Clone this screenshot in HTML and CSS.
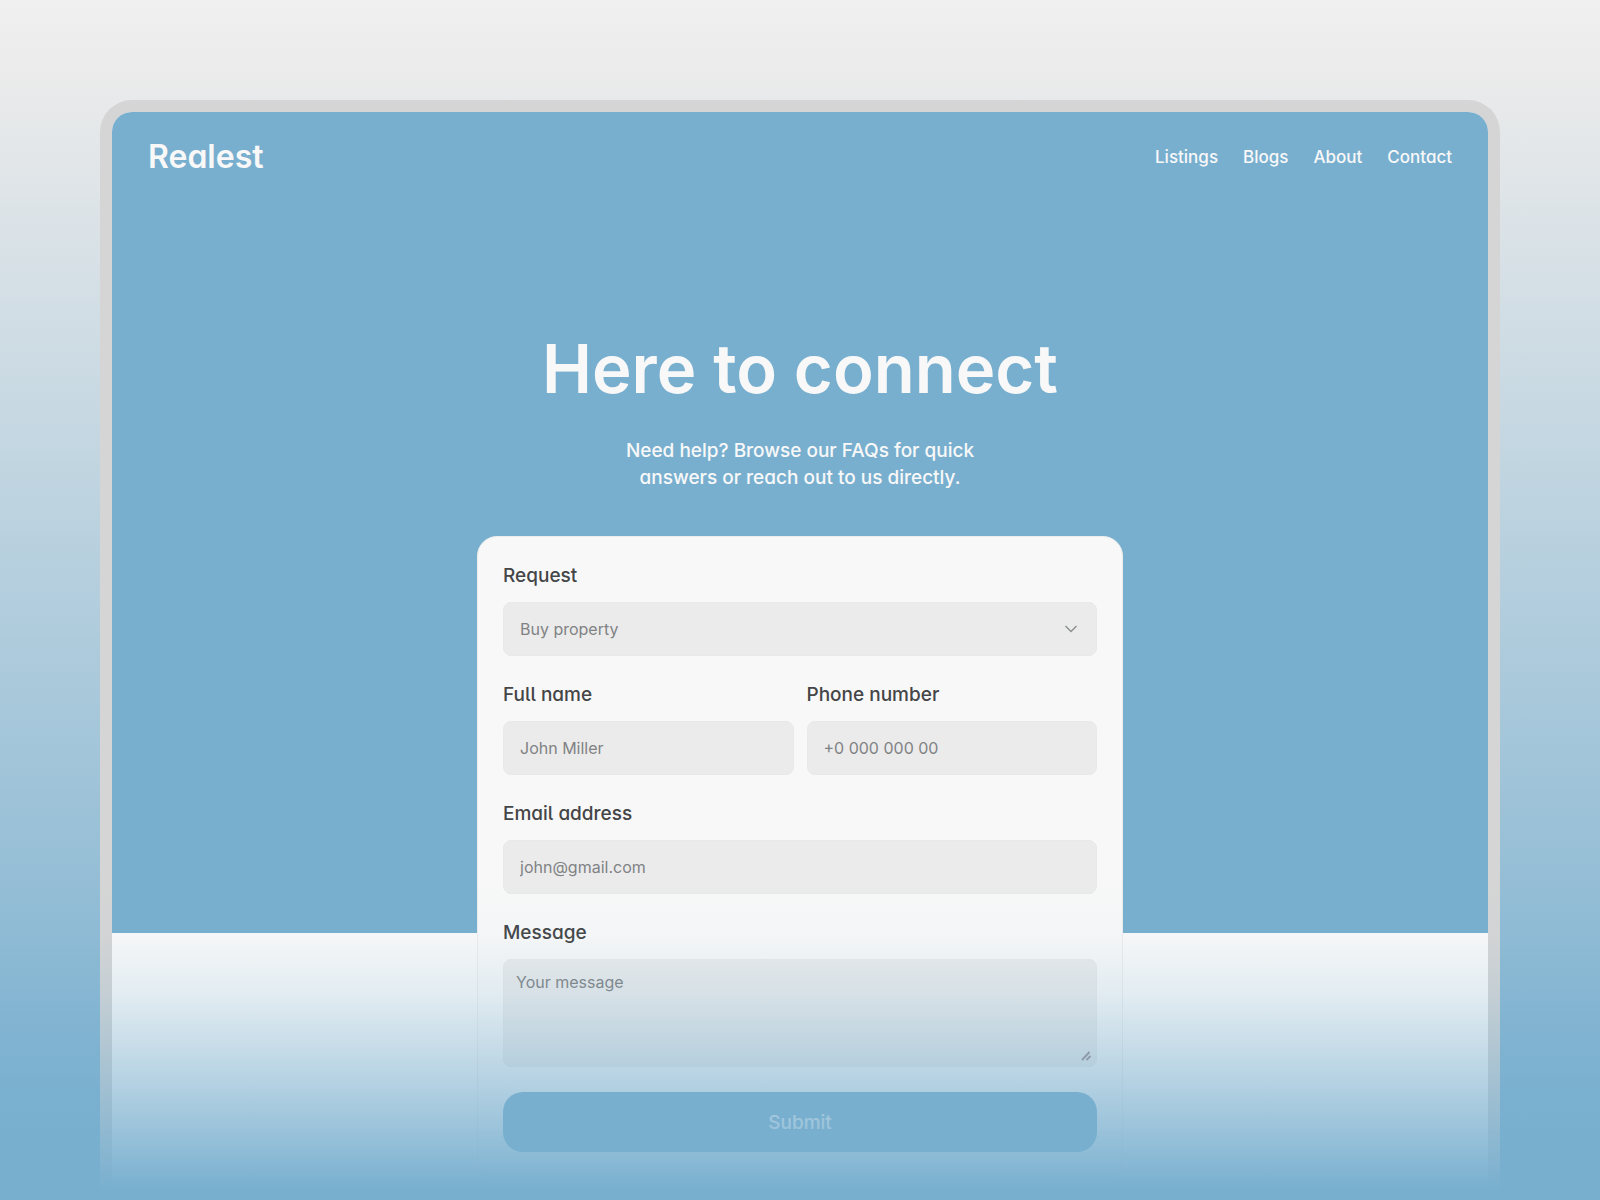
FILE: index.html
```html
<!DOCTYPE html>
<html lang="en">
<head>
    <meta charset="UTF-8">
    <meta name="viewport" content="width=device-width, initial-scale=1.0">
    <title>Realest - Contact</title>
    <link rel="stylesheet" href="styles.css">
</head>
<body>
    <div class="stage">
        <div class="frame">
            <header class="header">
                <a class="logo" href="#">Realest</a>
                <nav class="nav">
                    <a href="#">Listings</a>
                    <a href="#">Blogs</a>
                    <a href="#">About</a>
                    <a href="#">Contact</a>
                </nav>
            </header>
            <section class="hero">
                <h1>Here to connect</h1>
                <p>Need help? Browse our FAQs for quick<br>answers or reach out to us directly.</p>
            </section>
            <form class="card">
                <div class="field">
                    <label for="request">Request</label>
                    <div class="control">
                        <select id="request">
                            <option>Buy property</option>
                            <option>Sell property</option>
                            <option>Rent property</option>
                        </select>
                        <svg class="chevron" width="14" height="8" viewBox="0 0 14 8" fill="none" stroke="#8e9092" stroke-width="1.5">
                            <path d="M1.5 1L7 6.5L12.5 1" />
                        </svg>
                    </div>
                </div>
                <div class="field-row">
                    <div class="field">
                        <label for="name">Full name</label>
                        <input type="text" id="name" placeholder="John Miller">
                    </div>
                    <div class="field">
                        <label for="phone">Phone number</label>
                        <input type="tel" id="phone" placeholder="+0 000 000 00">
                    </div>
                </div>
                <div class="field">
                    <label for="email">Email address</label>
                    <input type="email" id="email" placeholder="john@gmail.com">
                </div>
                <div class="field">
                    <label for="message">Message</label>
                    <div class="control">
                        <textarea id="message" placeholder="Your message"></textarea>
                        <svg class="grip" width="11" height="10" viewBox="0 0 11 10" fill="none" stroke="#a08c90" stroke-width="2">
                            <path d="M1 9L8.5 1M5.5 9L9.5 5" />
                        </svg>
                    </div>
                </div>
                <button type="submit" class="btn">Submit</button>
            </form>
        </div>
        <div class="fade"></div>
    </div>
</body>
</html>
```
FILE: styles.css
```css
* {
    box-sizing: border-box;
}
body {
    margin: 0;
    font-family: Inter, "Liberation Sans", sans-serif;
    font-feature-settings: "cv11";
    color: #444547;
}
a {
    color: inherit;
    text-decoration: none;
}
.stage {
    position: relative;
    display: flex;
    min-height: 100vh;
    padding: 100px 100px 0;
    background: linear-gradient(#f0f0f0, #ebebeb 6%, #78afcf 96%);
}
.frame {
    flex: 1;
    border: 12px solid #d5d5d5;
    border-bottom: 0;
    border-radius: 32px 32px 0 0;
    background-color: #f9f9f9;
    overflow: hidden;
}
.header {
    display: flex;
    justify-content: space-between;
    align-items: center;
    height: 89px;
    padding: 0 36px;
    background-color: #78afcf;
    color: #f8f8f8;
}
.logo {
    font-size: 32px;
    font-weight: 600;
}
.nav {
    display: flex;
    gap: 25px;
    font-size: 17px;
    font-weight: 500;
}
.hero {
    padding: 124px 24px 442px;
    background-color: #78afcf;
    color: #f8f8f8;
    text-align: center;
}
.hero h1 {
    margin: 0;
    font-size: 67px;
    font-weight: 600;
    line-height: 88px;
}
.hero p {
    margin: 24px 0 0;
    font-size: 19px;
    font-weight: 500;
    line-height: 27px;
}
/* the card hangs over the lower edge of the hero */
.card {
    display: flex;
    flex-direction: column;
    gap: 25px;
    max-width: 646px;
    margin: -397px auto 0;
    padding: 25px;
    border: 1px solid #ececec;
    border-radius: 20px;
    background-color: #f8f8f8;
    position: relative;
}
.field {
    display: flex;
    flex-direction: column;
    gap: 12px;
}
.field-row {
    display: grid;
    grid-template-columns: 1fr 1fr;
    gap: 13px;
}
label {
    font-feature-settings: "cv05", "cv11";
    font-size: 19px;
    font-weight: 500;
    line-height: 28px;
}
input,
select,
textarea {
    width: 100%;
    height: 54px;
    margin: 0;
    padding: 0 16px;
    border: 1px solid #e9e9e9;
    border-radius: 8px;
    background-color: #ebebeb;
    color: #808284;
    font-family: inherit;
    font-size: 16px;
}
::placeholder {
    color: #808284;
}
select {
    appearance: none;
}
.control {
    position: relative;
}
.chevron {
    position: absolute;
    right: 19px;
    top: 23px;
    pointer-events: none;
}
textarea {
    display: block;
    height: 108px;
    padding: 12px;
    resize: none;
}
.grip {
    position: absolute;
    right: 5px;
    bottom: 6px;
    pointer-events: none;
}
.btn {
    height: 60px;
    border: 0;
    border-radius: 20px;
    background-color: #78afcf;
    color: #f8f8f8;
    font-family: inherit;
    font-size: 19px;
    font-weight: 500;
    cursor: pointer;
}
.fade {
    position: absolute;
    left: 0;
    right: 0;
    bottom: 0;
    height: 320px;
    background: linear-gradient(
        rgba(120, 175, 207, 0),
        rgba(120, 175, 207, 0.03) 17%,
        rgba(120, 175, 207, 0.17) 35%,
        rgba(120, 175, 207, 0.5) 61%,
        rgba(120, 175, 207, 0.8) 83%,
        #78afcf 97%
    );
    pointer-events: none;
}
```
